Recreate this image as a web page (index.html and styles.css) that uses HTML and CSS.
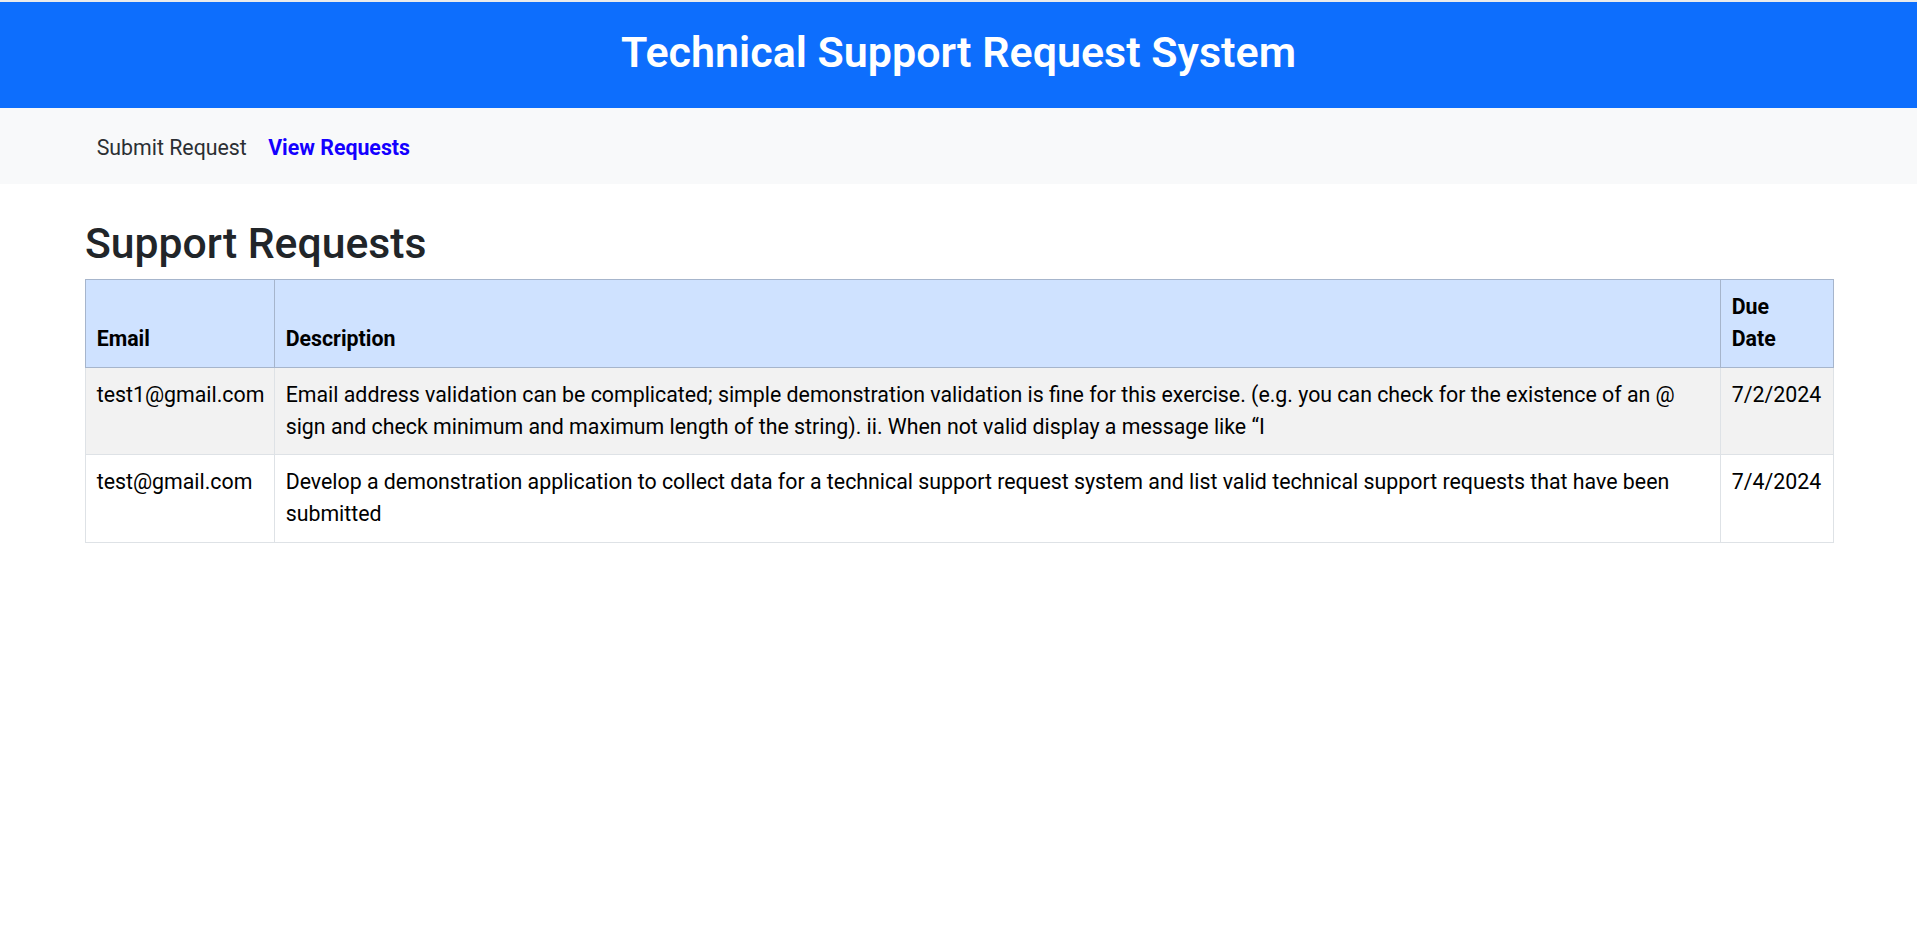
FILE: index.html
```html
<!DOCTYPE html>
<html lang="en">
<head>
<meta charset="utf-8">
<title>Technical Support Request System</title>
<link rel="stylesheet" href="styles.css">
</head>
<body>
<header class="site-header">
  <h1 class="site-title">Technical Support Request System</h1>
</header>
<nav class="site-nav">
  <a class="nav-link" href="#">Submit Request</a>
  <a class="nav-link active" href="#">View Requests</a>
</nav>
<main class="main">
  <h2 class="page-title">Support Requests</h2>
  <table class="req-table">
    <colgroup>
      <col class="col-email">
      <col class="col-desc">
      <col class="col-due">
    </colgroup>
    <thead>
      <tr>
        <th>Email</th>
        <th>Description</th>
        <th><span class="wrap-words">Due Date</span></th>
      </tr>
    </thead>
    <tbody>
      <tr class="striped">
        <td>test1@gmail.com</td>
        <td>Email address validation can be complicated; simple demonstration validation is fine for this exercise. (e.g. you can check for the existence of an @ sign and check minimum and maximum length of the string). ii. When not valid display a message like “I</td>
        <td>7/2/2024</td>
      </tr>
      <tr>
        <td>test@gmail.com</td>
        <td>Develop a demonstration application to collect data for a technical support request system and list valid technical support requests that have been submitted</td>
        <td>7/4/2024</td>
      </tr>
    </tbody>
  </table>
</main>
</body>
</html>
```
FILE: styles.css
```css
html, body {
  margin: 0;
  padding: 0;
  background: #ffffff;
}
body {
  font-family: Roboto, "Liberation Sans", Arial, sans-serif;
  font-size: 21.33px;
  line-height: 32px;
  color: #212529;
}
.site-header {
  border-top: 2px solid #ebebeb;
  background: #0d6efd;
  padding: 24px 0 30px;
  text-align: center;
}
.site-title {
  margin: 0;
  font-size: 43px;
  line-height: 52px;
  font-weight: 600;
  color: #ffffff;
}
.site-nav {
  background: #f8f9fa;
  padding: 24px 0 20px 86px;
  display: flex;
  align-items: center;
}
.nav-link {
  padding: 0 10.67px;
  font-size: 21.33px;
  line-height: 32px;
  color: #2b2f33;
  text-decoration: none;
}
.nav-link.active {
  color: #1400ff;
  font-weight: 700;
}
.main {
  padding: 0 83px 0 85px;
}
.page-title {
  margin: 34px 0 10px;
  font-size: 42.7px;
  line-height: 51px;
  font-weight: 500;
  color: #212529;
}
.req-table {
  width: 100%;
  border-collapse: collapse;
  table-layout: fixed;
  color: #000000;
}
.col-email { width: 189px; }
.col-due { width: 113px; }
.req-table th,
.req-table td {
  padding: 11.3px 10.67px;
  border: 1px solid #dee2e6;
  text-align: left;
  vertical-align: top;
}
.req-table thead th {
  background: #cfe2ff;
  border-color: #a6b5cc;
  font-weight: 700;
  vertical-align: bottom;
}
.wrap-words {
  display: inline-block;
  width: min-content;
}
.req-table tr.striped td {
  background: #f2f2f2;
}
```
